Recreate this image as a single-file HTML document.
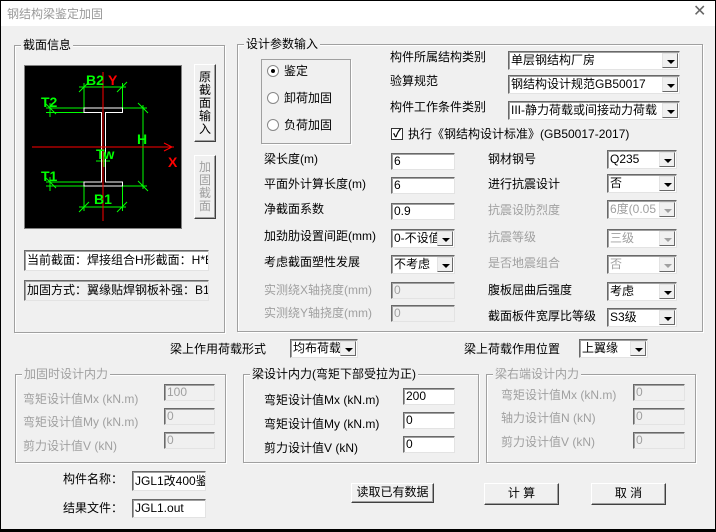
<!DOCTYPE html>
<html><head><meta charset="utf-8"><style>
*{margin:0;padding:0;box-sizing:border-box}
body{width:716px;height:532px;background:#000;overflow:hidden;font-family:"Liberation Sans","Noto Sans CJK SC",sans-serif;font-size:12px;color:#000}
#win{position:absolute;left:1px;top:1px;width:714px;height:528px;background:#f0f0f0}
#tb{position:absolute;left:0;top:0;width:714px;height:25px;background:#fff}
.a{position:absolute;white-space:nowrap;line-height:14px}
.g{color:#a0a0a0}
.grp{position:absolute;border:1px solid #a0a0a0;box-shadow:1px 1px 0 #fff inset,1px 1px 0 #fff}
.gt{position:absolute;top:-8px;left:6px;background:#f0f0f0;padding:0 2px;line-height:14px;white-space:nowrap}
.in{position:absolute;background:#fff;border-top:1px solid #696969;border-left:1px solid #696969;border-right:1px solid #e3e3e3;border-bottom:1px solid #e3e3e3;box-shadow:inset 1px 1px 0 #a0a0a0;padding-left:2px;line-height:15px;white-space:nowrap;overflow:hidden;font-size:12px}
.dis{background:#f0f0f0;color:#a0a0a0}
.cb{position:absolute;background:#fff;border-top:1px solid #696969;border-left:1px solid #696969;border-right:1px solid #e3e3e3;border-bottom:1px solid #e3e3e3;box-shadow:inset 1px 1px 0 #a0a0a0;padding-left:2px;white-space:nowrap;overflow:hidden;line-height:16px}
.cb i{position:absolute;right:1px;top:1px;bottom:1px;width:16px;background:#f0f0f0;border-top:1px solid #e3e3e3;border-left:1px solid #e3e3e3;border-right:1px solid #696969;border-bottom:1px solid #696969}
.cb i:after{content:"";position:absolute;left:4px;top:6px;border-left:4px solid transparent;border-right:4px solid transparent;border-top:4px solid #000}
.cb.dis i:after{border-top-color:#a0a0a0}
.btn{position:absolute;background:#f0f0f0;border-top:1px solid #fff;border-left:1px solid #fff;border-right:1px solid #404040;border-bottom:1px solid #404040;box-shadow:inset -1px -1px 0 #a0a0a0;text-align:center;white-space:nowrap}
.rad{position:absolute;width:12px;height:12px;border-radius:50%;background:#fff;border:1px solid #888}
</style></head><body><div id="win">
<div id="tb"><div class="a" style="left:6px;top:6px;font-size:12px;color:#999">钢结构梁鉴定加固</div>
<div class="a" style="left:692px;top:4px;font-size:16px;color:#666">✕</div></div>

<!-- section info -->
<div class="grp" style="left:13px;top:44px;width:211px;height:288px"><div class="gt">截面信息</div></div>
<svg style="position:absolute;left:23px;top:64px" width="158" height="164" viewBox="0 0 158 164">
<rect x="0.5" y="0.5" width="157" height="163" fill="#000" stroke="#808080"/>
<g stroke="#00ff00" stroke-width="1" fill="none">
<line x1="55" y1="22" x2="102" y2="22"/><line x1="60" y1="18" x2="60" y2="43"/><line x1="98.5" y1="18" x2="98.5" y2="43"/>
<line x1="55" y1="142" x2="102" y2="142"/><line x1="60" y1="121" x2="60" y2="146"/><line x1="98.5" y1="121" x2="98.5" y2="146"/>
<line x1="119" y1="40" x2="119" y2="124"/><line x1="98.5" y1="43" x2="123" y2="43"/><line x1="98.5" y1="121" x2="123" y2="121"/>
<line x1="22" y1="43" x2="60" y2="43"/><line x1="22" y1="47.5" x2="60" y2="47.5"/>
<line x1="22" y1="117" x2="60" y2="117"/><line x1="22" y1="121" x2="60" y2="121"/>
<line x1="26" y1="38" x2="26" y2="52"/><line x1="26" y1="112" x2="26" y2="126"/>
<line x1="72" y1="96" x2="86" y2="96"/><line x1="80" y1="88" x2="80" y2="102"/>
<path d="M55 27l10-10M93 27l10-10M55 147l10-10M93 147l10-10M114 38l10 10M114 116l10 10M22 39l10 10M22 113l10 10"/>
</g>
<path d="M60 43H98.5V47.5H81.5V117H98.5V121H60V117H77.5V47.5H60Z" fill="none" stroke="#fff" stroke-width="1"/>
<g stroke="#ff0000"><line x1="79" y1="7" x2="79" y2="156"/><line x1="8" y1="82" x2="150" y2="82"/><path d="M140 78l8 4-8 4" fill="none"/></g>
<g font-family="Liberation Sans" font-weight="bold" font-size="14">
<text x="62" y="20" fill="#00ff00">B2</text><text x="84" y="20" fill="#ff0000">Y</text>
<text x="17" y="42" fill="#00ff00">T2</text><text x="17" y="116" fill="#00ff00">T1</text>
<text x="113" y="79" fill="#00ff00">H</text><text x="144" y="102" fill="#ff0000">X</text>
<text x="72" y="94" fill="#00ff00">Tw</text><text x="70" y="139" fill="#00ff00">B1</text></g>
</svg>
<div class="btn" style="left:193px;top:63px;width:22px;height:78px;line-height:13px;padding-top:6px;white-space:normal;font-size:12px">原<br>截<br>面<br>输<br>入</div>
<div class="btn g" style="left:193px;top:154px;width:22px;height:64px;line-height:13px;padding-top:5px;white-space:normal;font-size:12px">加<br>固<br>截<br>面</div>
<div class="in" style="left:23px;top:249px;width:185px;height:21px;line-height:19px">当前截面：焊接组合H形截面：H*B</div>
<div class="in dis" style="left:23px;top:279px;width:185px;height:21px;line-height:19px;color:#000">加固方式：翼缘贴焊钢板补强：B1</div>

<!-- design params -->
<div class="grp" style="left:236px;top:43px;width:466px;height:288px"><div class="gt">设计参数输入</div></div>
<div style="position:absolute;left:260px;top:58px;width:90px;height:85px;border:1px solid #a0a0a0;box-shadow:1px 1px 0 #fff"></div>
<div class="rad" style="left:266px;top:64px"><div style="position:absolute;left:3px;top:3px;width:4px;height:4px;border-radius:50%;background:#000"></div></div>
<div class="rad" style="left:266px;top:91px"></div><div class="rad" style="left:266px;top:118px"></div>
<div class="a" style="left:283px;top:63px">鉴定</div><div class="a" style="left:283px;top:90px">卸荷加固</div><div class="a" style="left:283px;top:117px">负荷加固</div>

<div class="a" style="left:389px;top:49px">构件所属结构类别</div>
<div class="a" style="left:389px;top:73px">验算规范</div>
<div class="a" style="left:389px;top:99px">构件工作条件类别</div>
<div class="cb" style="left:507px;top:50px;width:172px;height:19px">单层钢结构厂房<i></i></div>
<div class="cb" style="left:507px;top:74px;width:172px;height:19px">钢结构设计规范GB50017<i></i></div>
<div class="cb" style="left:507px;top:100px;width:172px;height:19px">III-静力荷载或间接动力荷载<i></i></div>
<div style="position:absolute;left:390px;top:127px;width:12px;height:12px;background:#fff;border:1px solid #333;font-size:11px;line-height:10px;text-align:center;font-weight:bold">✓</div>
<div class="a" style="left:407px;top:126px">执行《钢结构设计标准》(GB50017-2017)</div>

<div class="a" style="left:263px;top:151px">梁长度(m)</div>
<div class="a" style="left:263px;top:176px">平面外计算长度(m)</div>
<div class="a" style="left:263px;top:201px">净截面系数</div>
<div class="a" style="left:263px;top:228px">加劲肋设置间距(mm)</div>
<div class="a" style="left:263px;top:254px">考虑截面塑性发展</div>
<div class="a g" style="left:263px;top:282px">实测绕X轴挠度(mm)</div>
<div class="a g" style="left:263px;top:305px">实测绕Y轴挠度(mm)</div>
<div class="in" style="left:390px;top:152px;width:64px;height:17px">6</div>
<div class="in" style="left:390px;top:176px;width:64px;height:17px">6</div>
<div class="in" style="left:390px;top:202px;width:64px;height:17px">0.9</div>
<div class="cb" style="left:390px;top:228px;width:64px;height:19px">0-不设值<i></i></div>
<div class="cb" style="left:390px;top:254px;width:64px;height:19px">不考虑<i></i></div>
<div class="in dis" style="left:390px;top:281px;width:64px;height:17px">0</div>
<div class="in dis" style="left:390px;top:304px;width:64px;height:17px">0</div>

<div class="a" style="left:487px;top:151px">钢材钢号</div>
<div class="a" style="left:487px;top:176px">进行抗震设计</div>
<div class="a g" style="left:487px;top:202px">抗震设防烈度</div>
<div class="a g" style="left:487px;top:229px">抗震等级</div>
<div class="a g" style="left:487px;top:255px">是否地震组合</div>
<div class="a" style="left:487px;top:282px">腹板屈曲后强度</div>
<div class="a" style="left:487px;top:308px">截面板件宽厚比等级</div>
<div class="cb" style="left:606px;top:149px;width:70px;height:19px">Q235<i></i></div>
<div class="cb" style="left:606px;top:173px;width:70px;height:19px">否<i></i></div>
<div class="cb dis" style="left:606px;top:199px;width:70px;height:19px">6度(0.05<i></i></div>
<div class="cb dis" style="left:606px;top:228px;width:70px;height:19px">三级<i></i></div>
<div class="cb dis" style="left:606px;top:254px;width:70px;height:19px">否<i></i></div>
<div class="cb" style="left:606px;top:281px;width:70px;height:19px">考虑<i></i></div>
<div class="cb" style="left:606px;top:307px;width:70px;height:19px">S3级<i></i></div>

<!-- load row -->
<div class="a" style="left:169px;top:341px">梁上作用荷载形式</div>
<div class="cb" style="left:289px;top:338px;width:68px;height:19px">均布荷载<i></i></div>
<div class="a" style="left:463px;top:341px">梁上荷载作用位置</div>
<div class="cb" style="left:578px;top:338px;width:69px;height:19px">上翼缘<i></i></div>

<div class="grp" style="left:14px;top:373px;width:211px;height:89px"><div class="gt g">加固时设计内力</div></div>
<div class="a g" style="left:22px;top:391px">弯矩设计值Mx (kN.m)</div>
<div class="a g" style="left:22px;top:414px">弯矩设计值My (kN.m)</div>
<div class="a g" style="left:22px;top:438px">剪力设计值V (kN)</div>
<div class="in dis" style="left:163px;top:383px;width:51px;height:17px">100</div>
<div class="in dis" style="left:163px;top:407px;width:51px;height:17px">0</div>
<div class="in dis" style="left:163px;top:431px;width:51px;height:17px">0</div>

<div class="grp" style="left:242px;top:373px;width:236px;height:89px"><div class="gt">梁设计内力(弯矩下部受拉为正)</div></div>
<div class="a" style="left:263px;top:392px">弯矩设计值Mx (kN.m)</div>
<div class="a" style="left:263px;top:416px">弯矩设计值My (kN.m)</div>
<div class="a" style="left:263px;top:440px">剪力设计值V (kN)</div>
<div class="in" style="left:402px;top:387px;width:52px;height:17px">200</div>
<div class="in" style="left:402px;top:411px;width:52px;height:17px">0</div>
<div class="in" style="left:402px;top:435px;width:52px;height:17px">0</div>

<div class="grp" style="left:485px;top:373px;width:210px;height:89px"><div class="gt g">梁右端设计内力</div></div>
<div class="a g" style="left:500px;top:387px">弯矩设计值Mx (kN.m)</div>
<div class="a g" style="left:500px;top:410px">轴力设计值N (kN)</div>
<div class="a g" style="left:500px;top:434px">剪力设计值V (kN)</div>
<div class="in dis" style="left:632px;top:383px;width:52px;height:17px">0</div>
<div class="in dis" style="left:632px;top:407px;width:52px;height:17px">0</div>
<div class="in dis" style="left:632px;top:431px;width:52px;height:17px">0</div>

<div class="a" style="left:62px;top:471px">构件名称：</div>
<div class="a" style="left:62px;top:500px">结果文件：</div>
<div class="in" style="left:131px;top:470px;width:74px;height:20px;line-height:18px">JGL1改400鉴定</div>
<div class="in" style="left:131px;top:498px;width:74px;height:19px;line-height:17px">JGL1.out</div>
<div class="btn" style="left:350px;top:482px;width:83px;height:20px;line-height:17px">读取已有数据</div>
<div class="btn" style="left:483px;top:482px;width:75px;height:22px;line-height:19px">计 算</div>
<div class="btn" style="left:590px;top:482px;width:75px;height:22px;line-height:19px">取 消</div>
</div></body></html>
